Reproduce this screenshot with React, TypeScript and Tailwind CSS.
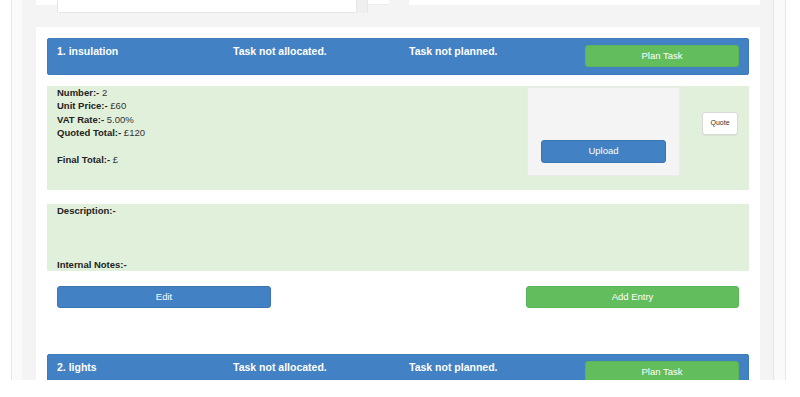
import React from 'react';

// ---------------------------------------------------------------------------
// Task list panel — quote items with plan / upload / edit actions
// ---------------------------------------------------------------------------

interface Task {
  title: string;
  number: number;
  unitPrice: string;
  vatRate: string;
  quotedTotal: string;
}

const tasks: Task[] = [
  { title: '1. insulation', number: 2, unitPrice: '£60', vatRate: '5.00%', quotedTotal: '£120' },
  { title: '2. lights', number: 1, unitPrice: '£40', vatRate: '5.00%', quotedTotal: '£40' },
];

export default function App() {
  return (
    <div className="w-[800px] h-[397px] bg-white font-['Liberation_Sans',Arial,sans-serif] text-[#222]">
      <div className="ml-[11px] w-[775px] h-[380px] overflow-hidden border-x border-[#e8e8e8] bg-[#fafafa] pl-[10px] pr-[11px]">
        <div className="h-full bg-[#f4f4f4] border-r border-[#e4e4e4] pl-[14px] pr-[13px]">
          {/* Top cards (scrolled off) */}
          <div className="flex items-start h-[27px]">
            <div className="w-[21px] h-[5px] bg-white" />
            <div className="w-[300px] h-[13px] bg-white border-x border-b border-[#e6e6e6] rounded-b-[2px]" />
            <div className="w-[11px] h-[13px] bg-[#efefef] border-r border-[#e6e6e6]" />
            <div className="w-[21px] h-[5px] bg-white border-b border-[#ececec]" />
            <div className="w-[20px]" />
            <div className="w-[351px] h-[5px] bg-white" />
          </div>

          {/* Task card */}
          <div className="bg-white px-[11px] pt-[11px] pb-[40px]">
            <TaskHeader title={tasks[0].title} />
            <TaskBody task={tasks[0]} />
            <div className="mt-[46px]">
              <TaskHeader title={tasks[1].title} />
            </div>
          </div>
        </div>
      </div>
    </div>
  );
}

function TaskHeader({ title }: { title: string }) {
  return (
    <div className="flex h-[37px] pl-[9px] bg-[#4281c3] border border-[#3d7bbb] rounded-[2px] text-white">
      <div className="w-[176px] pt-[5px] text-[10.5px] font-bold leading-[14px]">{title}</div>
      <div className="w-[176px] pt-[5px] text-[10.5px] font-bold leading-[14px]">Task not allocated.</div>
      <div className="w-[176px] pt-[5px] text-[10.5px] font-bold leading-[14px]">Task not planned.</div>
      <div className="w-[154px] pt-[6px]">
        <button className="block w-full h-[22px] bg-[#62bd5d] border border-[#59b556] rounded-[3px] text-[9.5px] text-white">
          Plan Task
        </button>
      </div>
    </div>
  );
}

function TaskBody({ task }: { task: Task }) {
  return (
    <>
      {/* Pricing */}
      <div className="flex mt-[11px] h-[104px] bg-[#e1f0da]">
        <div className="w-[480px] px-[10px] text-[9.5px] leading-[13.4px]">
          <div><span className="font-bold">Number:-</span> <span className="text-[#333]">{task.number}</span></div>
          <div><span className="font-bold">Unit Price:-</span> <span className="text-[#333]">{task.unitPrice}</span></div>
          <div><span className="font-bold">VAT Rate:-</span> <span className="text-[#333]">{task.vatRate}</span></div>
          <div><span className="font-bold">Quoted Total:-</span> <span className="text-[#333]">{task.quotedTotal}</span></div>
          <div className="h-[13.4px]" />
          <div><span className="font-bold">Final Total:-</span> <span className="text-[#333]">£</span></div>
        </div>
        <div className="w-[153px] h-[89px] mt-[1px] flex flex-col justify-end px-[13px] pb-[12px] bg-[#f4f4f4] border border-[#ebebeb]">
          <button className="block w-full h-[23px] bg-[#4281c3] border border-[#3a74b1] rounded-[3px] text-[9.5px] text-white">
            Upload
          </button>
        </div>
        <div className="ml-[22px] mt-[26px]">
          <button className="block w-[36px] h-[23px] bg-white border border-[#d9d9d9] rounded-[3px] text-[7px] text-[#333] shadow-[0_1px_1px_rgba(0,0,0,0.05)]">
            Quote
          </button>
        </div>
      </div>

      {/* Notes */}
      <div className="mt-[14px] h-[67px] bg-[#e1f0da] px-[10px] text-[9.5px] leading-[13.4px] font-bold">
        <div>Description:-</div>
        <div className="h-[40.2px]" />
        <div>Internal Notes:-</div>
      </div>

      {/* Actions */}
      <div className="flex mt-[15px]">
        <div className="w-[234px] px-[10px]">
          <button className="block w-full h-[22px] bg-[#4281c3] border border-[#3a74b1] rounded-[3px] text-[9.5px] text-white">
            Edit
          </button>
        </div>
        <div className="w-[235px]" />
        <div className="w-[233px] px-[10px]">
          <button className="block w-full h-[22px] bg-[#62bd5d] border border-[#59b556] rounded-[3px] text-[9.5px] text-white">
            Add Entry
          </button>
        </div>
      </div>
    </>
  );
}
